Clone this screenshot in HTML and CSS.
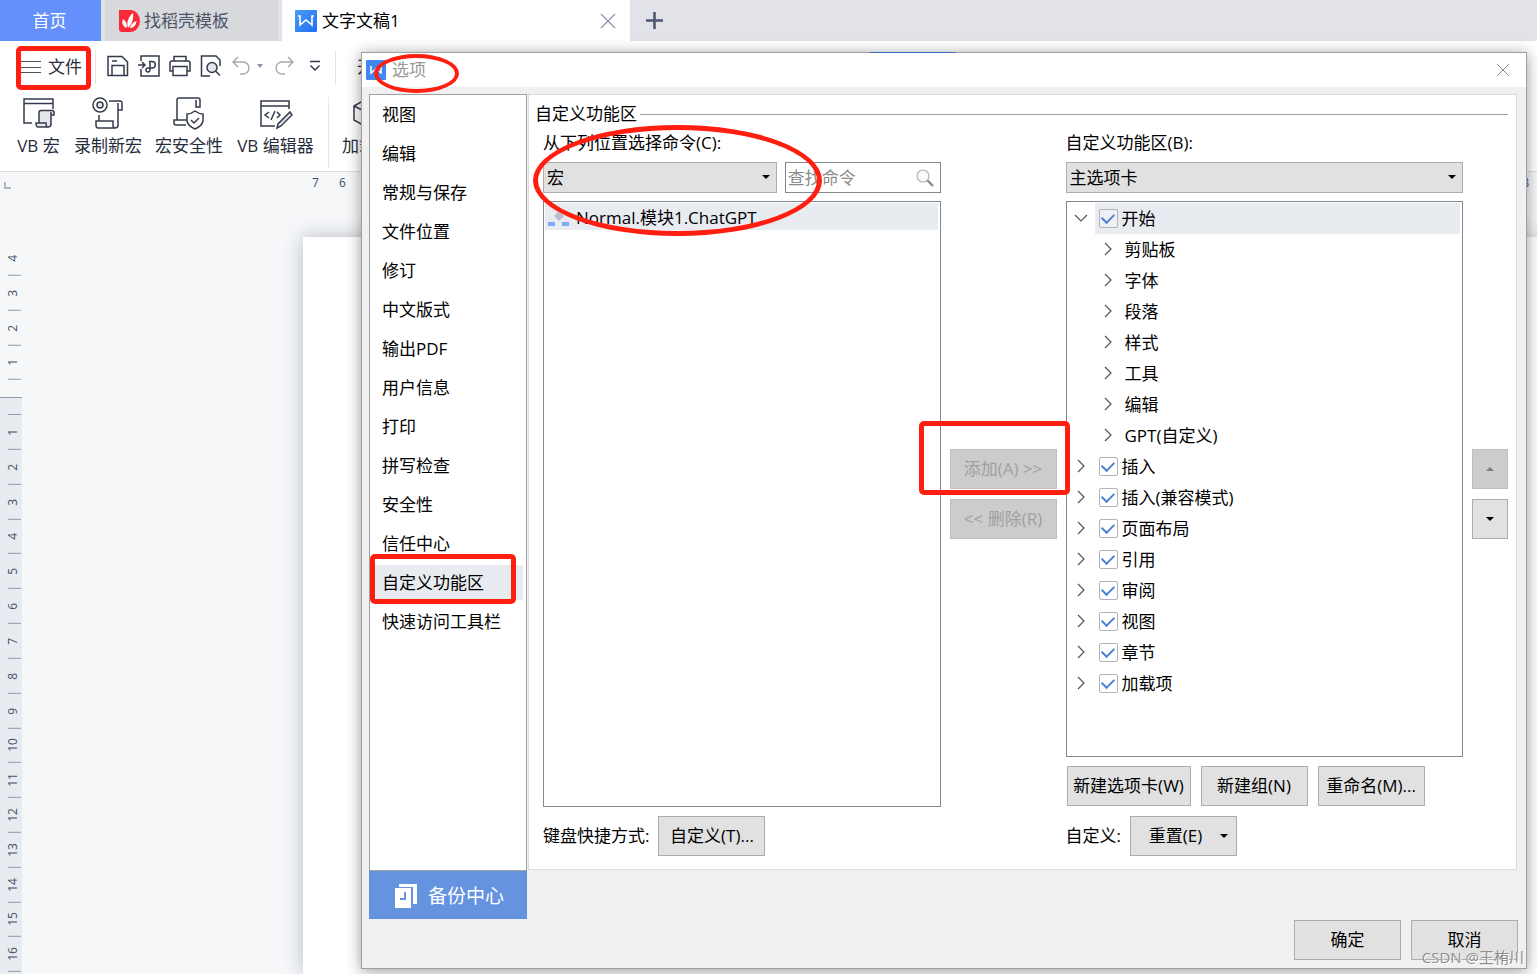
FILE: index.html
```html
<!DOCTYPE html>
<html lang="zh-CN">
<head>
<meta charset="utf-8">
<title>文字文稿1</title>
<link rel="stylesheet" href="styles.css">
</head>
<body>
<div class="app">
  <nav class="tabs">
    <a class="tab tab-home" href="#home">首页</a>
    <a class="tab tab-store" href="#store">
      <svg width="21" height="22" viewBox="0 0 21 22"><path d="M0 0H11A10 11 0 0 1 11 22H3Q0 22 0 19Z" fill="#fb2a36"/><path d="M9 18C7 12 10 6 14 3C15 9 13 14 9 18ZM7.500 18C3.500 16 2.500 12 4 9C7 11 8.500 14 7.500 18ZM11 18C12 14 14 12 17.500 11C17 15 15 18 11 18Z" fill="#fff"/></svg>
      找稻壳模板
    </a>
    <div class="tab tab-doc">
      <svg width="22" height="22" viewBox="0 0 22 22"><defs><linearGradient id="wg" x1="0" y1="0" x2="1" y2="1"><stop offset="0" stop-color="#4c9bfa"/><stop offset="1" stop-color="#1d6ff0"/></linearGradient></defs><rect width="22" height="22" rx="1" fill="url(#wg)"/><path d="M3 6H5V15L11 10L17 15V6H19" fill="none" stroke="#fff" stroke-width="1.600"/></svg>
      <a class="doc-name" href="#doc">文字文稿1</a>
      <button class="plain" aria-label="关闭标签"><svg width="16" height="16" viewBox="0 0 16 16"><path d="M1 1L15 15M15 1L1 15" stroke="#8a93a8" stroke-width="1.300"/></svg></button>
    </div>
    <button class="plain tab-add" aria-label="新建标签"><svg width="17" height="17" viewBox="0 0 17 17"><path d="M8.500 0V17M0 8.500H17" stroke="#4d5771" stroke-width="2.600"/></svg></button>
  </nav>

  <header class="toolbar">
    <button class="plain file-menu"><svg width="20" height="14" viewBox="0 0 20 14"><path d="M0 1.500H20M0 7.500H20M0 12.500H20" stroke="#4b5161" stroke-width="1.200"/></svg>文件</button>
    <span class="divider"></span>
    <div class="quick">
      <button class="plain" aria-label="保存"><svg class="line" width="22" height="22" viewBox="0 0 22 22"><path d="M1 1.500H15L20.500 7V20.500H1ZM5 20.500V10.500H17V20.500M5 6H10"/></svg></button>
      <button class="plain" aria-label="输出为PDF"><svg class="line" width="22" height="22" viewBox="0 0 22 22"><path d="M3 6V1H21V21H3V14M0 10H7M4 7L7 10L4 13M11 6.500H14A3 3 0 0 1 14 13H10Q8 13 8 15Q8 17 10 17Q12 17 12 14V7"/></svg></button>
      <button class="plain" aria-label="打印"><svg class="line" width="22" height="22" viewBox="0 0 22 22"><path d="M5 6V1.500H17V6M4 16H1V8Q1 6 3 6H19Q21 6 21 8V16H18M4 11.500H18V20.500H4Z"/></svg></button>
      <button class="plain" aria-label="打印预览"><svg class="line" width="22" height="22" viewBox="0 0 22 22"><path d="M10 21H1.500V1H16L20 5V11"/><circle cx="12" cy="12.500" r="5" fill="#e3e6eb"/><path d="M15.500 16L20 20.500"/></svg></button>
      <div class="undo-group">
        <button class="plain" aria-label="撤销"><svg class="line faded" width="22" height="22" viewBox="0 0 22 22"><path d="M7 2L2 7L7 12M2 7H12A6 6 0 0 1 12 19H9"/></svg></button>
        <button class="plain" aria-label="撤销列表"><svg width="6" height="4" viewBox="0 0 6 4"><path d="M0 0H6L3 4Z" fill="#8a93a8"/></svg></button>
      </div>
      <button class="plain redo" aria-label="恢复"><svg class="line faded" width="20" height="22" viewBox="0 0 20 22"><path d="M13 2L18 7L13 12M18 7H7A6 6 0 0 0 7 19H10"/></svg></button>
      <button class="plain more" aria-label="更多"><svg class="line" width="12" height="12" viewBox="0 0 12 12"><path d="M1 1.500H11M1.500 5.500L6 10L10.500 5.500"/></svg></button>
    </div>
    <span class="divider"></span>
    <a class="menu-start" href="#start">开始</a>
  </header>

  <section class="ribbon">
    <button class="plain tool"><svg class="line" width="34" height="34" viewBox="0 0 34 34"><path d="M10 26H2V2H31V12M2 6.500H31"/><path fill="#e3e6eb" d="M17 26V16Q17 13.500 19 13.500H30Q32 13.500 32 15.500V18H29V27Q29 30 26 30H16Q14 30 14 26H24Q24 30 26 30M29 18V15"/></svg>VB 宏</button>
    <button class="plain tool"><svg class="line" width="34" height="34" viewBox="0 0 34 34"><circle cx="9" cy="8" r="7"/><circle cx="9" cy="8" r="3" fill="#e3e6eb"/><path d="M18 4H29Q31 4 31 6V13H27V28Q27 31 24 31H7Q5 31 5 28V24H22V28Q22 31 24 31M27 13V6M8 24V18"/></svg>录制新宏</button>
    <button class="plain tool"><svg class="line" width="34" height="34" viewBox="0 0 34 34"><path d="M14 28H4Q2 28 2 26V23H15M5 23V3Q5 1 7 1H26Q28 1 28 3V10H24V3"/><path d="M23 14Q27 17 31 17V24Q30 29 23 32Q16 29 15 24V17Q19 17 23 14ZM19 23L22 26L27 21"/></svg>宏安全性</button>
    <button class="plain tool tool-editor"><svg class="line" width="34" height="34" viewBox="0 0 34 34"><path d="M16 29H2V4H30V12M2 9H30M10 15L6 18L10 21M16 14L12 23M18 15L21 18L18 21"/><path d="M31 15L33 18L22 29L18 31L19 27Z" fill="#e3e6eb"/></svg>VB 编辑器</button>
    <span class="ribbon-divider"></span>
    <button class="plain tool"><svg class="line" width="34" height="34" viewBox="0 0 34 34"><path d="M17 1L31 9V23L17 31L3 23V9ZM3 9L17 16L31 9M17 16V31"/></svg>加载项</button>
  </section>

  <main class="workspace">
    <aside class="vruler">
      <span class="corner"></span>
      <div class="vtop"><span>4</span><span>3</span><span>2</span><span>1</span></div>
      <div class="vmain"><i class="tick"></i><div class="marks"><span>1</span><span>2</span><span>3</span><span>4</span><span>5</span><span>6</span><span>7</span><span>8</span><span>9</span><span>10</span><span>11</span><span>12</span><span>13</span><span>14</span><span>15</span><span>16</span></div></div>
    </aside>
    <div class="canvas">
      <div class="hruler"><span>7</span><span>6</span><span class="hr-end">8</span></div>
      <div class="paper"></div>
    </div>
  </main>

  <section class="dialog" role="dialog" aria-labelledby="dlg-title">
    <header class="dlg-bar">
      <svg width="20" height="20" viewBox="0 0 20 20"><rect width="20" height="20" rx="1" fill="#4187f2"/><path d="M5 6V13L10 9L15 13V6" fill="none" stroke="#fff" stroke-width="1.500"/></svg>
      <h1 id="dlg-title">选项</h1>
      <button class="plain" aria-label="关闭"><svg width="14" height="14" viewBox="0 0 14 14"><path d="M1 1L13 13M13 1L1 13" stroke="#8c8c8c"/></svg></button>
    </header>
    <div class="dlg-body">
      <nav class="side">
        <ul>
          <li><a href="#s1">视图</a></li><li><a href="#s2">编辑</a></li><li><a href="#s3">常规与保存</a></li><li><a href="#s4">文件位置</a></li><li><a href="#s5">修订</a></li><li><a href="#s6">中文版式</a></li><li><a href="#s7">输出PDF</a></li><li><a href="#s8">用户信息</a></li><li><a href="#s9">打印</a></li><li><a href="#s10">拼写检查</a></li><li><a href="#s11">安全性</a></li><li><a href="#s12">信任中心</a></li><li><a class="current" href="#s13">自定义功能区</a></li><li><a href="#s14">快速访问工具栏</a></li>
        </ul>
        <button class="backup"><svg width="22" height="24" viewBox="0 0 22 24"><path d="M4 0H22V20H18V3H4Z" fill="#fff"/><path d="M0 4H16V24H0Z" fill="#fff"/><path d="M10 8V15H5" fill="none" stroke="#6593e0" stroke-width="2"/></svg>备份中心</button>
      </nav>
      <div class="panel">
        <h2>自定义功能区</h2>
        <div class="columns">
          <div class="col">
            <label for="source">从下列位置选择命令(C):</label>
            <div class="pick-row">
              <div class="select"><select id="source"><option>宏</option></select></div>
              <div class="search"><input type="text" placeholder="查找命令" aria-label="查找命令"><svg width="18" height="18" viewBox="0 0 18 18"><circle cx="7" cy="7" r="6" fill="#fafafa" stroke="#b4b4b4" stroke-width="1.200"/><path d="M11.500 11.500L17 17" stroke="#8a8a8a" stroke-width="2.400"/></svg></div>
            </div>
            <ul class="commands" role="listbox" aria-label="命令">
              <li role="option" aria-selected="true"><svg width="22" height="18" viewBox="0 0 22 18"><path d="M11 2L16 7L11 12L6 7Z" fill="#b7bfcf"/><path d="M0 13H7V17H0ZM14 13H21V17H14Z" fill="#82a9f5"/></svg>Normal.模块1.ChatGPT</li>
            </ul>
            <div class="row"><span>键盘快捷方式:</span><button class="btn">自定义(T)...</button></div>
          </div>
          <div class="mid">
            <button class="btn" disabled>添加(A) &gt;&gt;</button>
            <button class="btn" disabled>&lt;&lt; 删除(R)</button>
          </div>
          <div class="col">
            <label for="target">自定义功能区(B):</label>
            <div class="select"><select id="target"><option>主选项卡</option></select></div>
            <ul class="tree">
              <li><div class="node"><button class="plain chev" aria-label="折叠"><svg width="14" height="8" viewBox="0 0 14 8"><path d="M1 1L7 7L13 1"/></svg></button><label class="pick selected"><input type="checkbox" checked>开始</label></div>
                <ul>
                  <li class="node"><button class="plain chev" aria-label="展开"><svg width="8" height="14" viewBox="0 0 8 14"><path d="M1 1L7 7L1 13"/></svg></button>剪贴板</li>
                  <li class="node"><button class="plain chev" aria-label="展开"><svg width="8" height="14" viewBox="0 0 8 14"><path d="M1 1L7 7L1 13"/></svg></button>字体</li>
                  <li class="node"><button class="plain chev" aria-label="展开"><svg width="8" height="14" viewBox="0 0 8 14"><path d="M1 1L7 7L1 13"/></svg></button>段落</li>
                  <li class="node"><button class="plain chev" aria-label="展开"><svg width="8" height="14" viewBox="0 0 8 14"><path d="M1 1L7 7L1 13"/></svg></button>样式</li>
                  <li class="node"><button class="plain chev" aria-label="展开"><svg width="8" height="14" viewBox="0 0 8 14"><path d="M1 1L7 7L1 13"/></svg></button>工具</li>
                  <li class="node"><button class="plain chev" aria-label="展开"><svg width="8" height="14" viewBox="0 0 8 14"><path d="M1 1L7 7L1 13"/></svg></button>编辑</li>
                  <li class="node"><button class="plain chev" aria-label="展开"><svg width="8" height="14" viewBox="0 0 8 14"><path d="M1 1L7 7L1 13"/></svg></button>GPT(自定义)</li>
                </ul>
              </li>
              <li class="node"><button class="plain chev" aria-label="展开"><svg width="8" height="14" viewBox="0 0 8 14"><path d="M1 1L7 7L1 13"/></svg></button><label class="pick"><input type="checkbox" checked>插入</label></li>
              <li class="node"><button class="plain chev" aria-label="展开"><svg width="8" height="14" viewBox="0 0 8 14"><path d="M1 1L7 7L1 13"/></svg></button><label class="pick"><input type="checkbox" checked>插入(兼容模式)</label></li>
              <li class="node"><button class="plain chev" aria-label="展开"><svg width="8" height="14" viewBox="0 0 8 14"><path d="M1 1L7 7L1 13"/></svg></button><label class="pick"><input type="checkbox" checked>页面布局</label></li>
              <li class="node"><button class="plain chev" aria-label="展开"><svg width="8" height="14" viewBox="0 0 8 14"><path d="M1 1L7 7L1 13"/></svg></button><label class="pick"><input type="checkbox" checked>引用</label></li>
              <li class="node"><button class="plain chev" aria-label="展开"><svg width="8" height="14" viewBox="0 0 8 14"><path d="M1 1L7 7L1 13"/></svg></button><label class="pick"><input type="checkbox" checked>审阅</label></li>
              <li class="node"><button class="plain chev" aria-label="展开"><svg width="8" height="14" viewBox="0 0 8 14"><path d="M1 1L7 7L1 13"/></svg></button><label class="pick"><input type="checkbox" checked>视图</label></li>
              <li class="node"><button class="plain chev" aria-label="展开"><svg width="8" height="14" viewBox="0 0 8 14"><path d="M1 1L7 7L1 13"/></svg></button><label class="pick"><input type="checkbox" checked>章节</label></li>
              <li class="node"><button class="plain chev" aria-label="展开"><svg width="8" height="14" viewBox="0 0 8 14"><path d="M1 1L7 7L1 13"/></svg></button><label class="pick"><input type="checkbox" checked>加载项</label></li>
            </ul>
            <div class="row spaced"><button class="btn wide">新建选项卡(W)</button><button class="btn">新建组(N)</button><button class="btn">重命名(M)...</button></div>
            <div class="row"><span>自定义:</span><button class="btn drop">重置(E)</button></div>
          </div>
          <div class="mid">
            <button class="btn move" disabled aria-label="上移"><svg width="8" height="4" viewBox="0 0 8 4"><path d="M0 4H8L4 0Z" fill="#7c7c7c"/></svg></button>
            <button class="btn move" aria-label="下移"><svg width="8" height="4" viewBox="0 0 8 4"><path d="M0 0H8L4 4Z"/></svg></button>
          </div>
        </div>
      </div>
    </div>
    <footer class="dlg-foot"><button class="btn">确定</button><button class="btn">取消</button></footer>
    <span class="tab-peek"></span>
    <span class="mark oval mark-title"></span>
    <span class="mark oval mark-source"></span>
    <span class="mark mark-add"></span>
    <span class="mark mark-side"></span>
  </section>
  <span class="mark mark-file"></span>
  <span class="credit">CSDN @王栯川</span>
</div>
</body>
</html>
```
FILE: styles.css
```css
* { box-sizing: border-box; }
body {
  margin: 0;
  font: 17px/24px "Open Sans", "Noto Sans CJK SC", sans-serif;
  color: #000;
}
button, input, select { font: inherit; color: inherit; margin: 0; }
ul { list-style: none; margin: 0; padding: 0; }
a { color: inherit; text-decoration: none; }
svg { display: block; flex: none; }
.plain { border: 0; background: none; padding: 0; display: flex; align-items: center; justify-content: center; }
.line { fill: none; stroke: #343b4c; stroke-width: 1.5; }
.faded { stroke: #a9abb0; }

.app { position: relative; min-height: 100vh; display: flex; flex-direction: column; overflow: hidden; background: #fff; }

.tabs { display: flex; gap: 4px; height: 41px; background: #e1e3e8; }
.tab { display: flex; align-items: center; padding-top: 1px; }
.tab-home { width: 101px; padding-right: 2px; justify-content: center; background: #6490fb; color: #fff; }
.tab-store { width: 173px; padding-left: 14px; gap: 4px; background: #d8d9dd; color: #4d5568; }
.tab-doc { width: 348px; padding: 1px 14px 0 13px; gap: 5px; background: #fff; }
.doc-name { flex: 1; }
.tab-add { width: 40px; }

.toolbar { display: flex; align-items: center; height: 51px; padding-left: 21px; color: #262c3b; }
.file-menu { gap: 7px; width: 74px; justify-content: flex-start; }
.divider { width: 1px; height: 34px; background: #e2e4e8; }
.quick { display: flex; align-items: center; gap: 9px; width: 239px; padding: 0 0 2px 11px; }
.undo-group { display: flex; align-items: center; gap: 4px; }
.redo { margin-left: 3px; }
.more { margin-left: 5px; }
.menu-start { padding-left: 21px; }

.ribbon { display: flex; height: 80px; padding: 5px 0 3px 16px; gap: 13px; color: #262c3b; border-bottom: 1px solid #dcdfe3; white-space: nowrap; }
.tool { flex-direction: column; justify-content: flex-start; gap: 3px; min-width: 45px; }
.tool-editor { min-width: 79px; }
.ribbon-divider { width: 1px; background: #e6e8eb; }

.workspace { flex: 1; display: grid; grid-template-columns: 22px 1fr; background: #f5f7f9; color: #46506a; font-size: 12px; line-height: 16px; }
.vruler { display: flex; flex-direction: column; }
.corner { width: 7px; height: 7px; margin: 10px 0 52px 4px; border: solid #b0b5c0; border-width: 0 0 2px 2px; }
.vtop { display: grid; grid-auto-rows: 1fr; height: 157px; padding-bottom: 17px; border-bottom: 1px solid #8f9ab0; }
.vmain { flex: 1; display: flex; flex-direction: column; padding: 16px 0 2px; background: #e8ebf0; }
.tick { height: 1px; margin: 0 1px 0 8px; background: #8f9ab0; }
.marks { flex: 1; display: grid; grid-auto-rows: 1fr; }
.vtop span, .marks span { writing-mode: vertical-rl; transform: rotate(180deg); text-align: center; line-height: 10px; margin: 0 1px 0 8px; padding-left: 3px; border-top: 1px solid #8f9ab0; }
.canvas { display: flex; flex-direction: column; min-width: 0; }
.hruler { display: flex; gap: 20px; height: 65px; padding: 3px 0 0 290px; }
.hr-end { margin-left: auto; padding-right: 8px; }
.paper { flex: 1; margin-left: 281px; background: #fff; box-shadow: 0 0 18px #b9bcc0; }

.dialog { position: absolute; inset: 52px 10px 5px 361px; display: flex; flex-direction: column; background: #f0f0f0; border: 1px solid #a0a0a0; box-shadow: 0 2px 14px rgba(0, 0, 0, .4); }
.dlg-bar { display: flex; align-items: center; height: 34px; padding: 0 16px 0 4px; gap: 6px; background: #fff; }
.dlg-bar h1 { flex: 1; margin: 0; font-size: 17px; font-weight: 400; color: #999; }
.dlg-body { flex: 1; display: flex; gap: 1px; padding: 7px 9px 0 7px; }
.side { width: 158px; display: flex; flex-direction: column; }
.side ul { flex: 1; padding: 2px 3px; background: #fff; border: 1px solid #a0a0a0; }
.side li { margin-bottom: 4px; }
.side a { display: block; padding: 0 9px; line-height: 35px; }
.side .current { background: #e8ebf0; }
.backup { display: flex; align-items: center; justify-content: center; gap: 11px; height: 48px; padding: 2px 0 0 3px; border: 0; background: #6593e0; color: #fff; font-size: 19px; }
.panel { flex: 1; display: flex; flex-direction: column; margin-bottom: 49px; padding: 7px 8px 13px 6px; background: #fff; border: 1px solid #dcdcdc; }
.panel h2 { display: flex; align-items: center; gap: 3px; margin: 0 0 5px; font-size: 17px; font-weight: 400; }
.panel h2::after { content: ""; flex: 1; height: 1px; background: #a0a0a0; }
.columns { flex: 1; display: grid; grid-template-columns: 1fr 107px 1fr 36px; gap: 9px; padding-left: 8px; }
.col { display: flex; flex-direction: column; min-width: 0; }
.col > label { margin-bottom: 7px; }
.mid { display: flex; flex-direction: column; justify-content: center; gap: 10px; }
.pick-row { display: grid; grid-template-columns: 3fr 2fr; gap: 8px; }
.select { position: relative; }
.select select { appearance: none; display: block; width: 100%; height: 31px; padding: 0 3px; background: #e1e1e1; border: 1px solid #adadad; border-radius: 0; }
.select::after, .drop::after { content: ""; border: 4px solid transparent; border-top-color: #000; border-bottom: 0; }
.select::after { position: absolute; right: 7px; top: 13px; }
.search { display: flex; align-items: center; min-width: 0; height: 31px; padding: 0 6px 0 2px; border: 1px solid #828790; }
.search input { flex: 1; min-width: 0; padding: 0; border: 0; outline: 0; background: none; }
.search input::placeholder { color: #8a8a8a; }
.commands, .tree { flex: 1; margin: 8px 0 9px; padding: 1px 2px 1px 1px; border: 1px solid #828790; }
.commands li { display: flex; align-items: center; gap: 6px; height: 27px; padding: 2px 0 0 3px; background: #e8ebf0; }
.row { display: flex; align-items: center; gap: 9px; }
.spaced { gap: 10px; padding-left: 1px; margin-bottom: 10px; }
.btn { display: flex; align-items: center; justify-content: center; width: 107px; height: 40px; padding: 0; background: #e1e1e1; border: 1px solid #adadad; white-space: nowrap; }
.btn:disabled { background: #ccc; border-color: #bfbfbf; color: #a0a0a0; }
.btn.wide { width: 124px; }
.btn.move { width: 36px; }
.drop { gap: 18px; padding-left: 10px; }
.tree ul { padding-left: 27px; }
.node { display: flex; align-items: center; height: 31px; }
.chev { width: 27px; height: 31px; padding-bottom: 1px; }
.tree ul .chev { width: 30px; padding-right: 3px; }
.chev svg { fill: none; stroke: #555; stroke-width: 1.2; }
.pick { flex: 1; display: flex; align-items: center; gap: 4px; height: 31px; padding-left: 4px; }
.selected { background: #e8ebf0; }
.pick input { appearance: none; display: grid; place-items: center; width: 19px; height: 19px; border: 1px solid #b0b3b8; border-radius: 2px; background: #fff; }
.pick input:checked::before { content: ""; width: 10px; height: 6px; border: solid #4a7fd0; border-width: 0 0 2px 2px; transform: translateY(-2px) rotate(-45deg); }
.selected input { background: #eef0f3; }
.dlg-foot { display: flex; justify-content: flex-end; gap: 10px; padding: 1px 8px 8px; }
.tab-peek { position: absolute; top: -1px; left: 508px; width: 86px; height: 1px; background: #3b6fc4; }

.mark { position: absolute; border: 5px solid #ff1e10; border-radius: 5px; pointer-events: none; }
.oval { border-radius: 50%; }
.mark-file { left: 16px; top: 46px; width: 75px; height: 44px; }
.mark-title { left: 12px; top: 1px; width: 85px; height: 39px; border-width: 4px; }
.mark-source { left: 171px; top: 72px; width: 289px; height: 111px; }
.mark-add { left: 557px; top: 368px; width: 151px; height: 74px; }
.mark-side { left: 8px; top: 501px; width: 146px; height: 50px; }
.credit { position: absolute; right: 13px; bottom: 5px; font-size: 15px; color: #8e8e8e; text-shadow: 1px 1px 0 #fff; }
```
